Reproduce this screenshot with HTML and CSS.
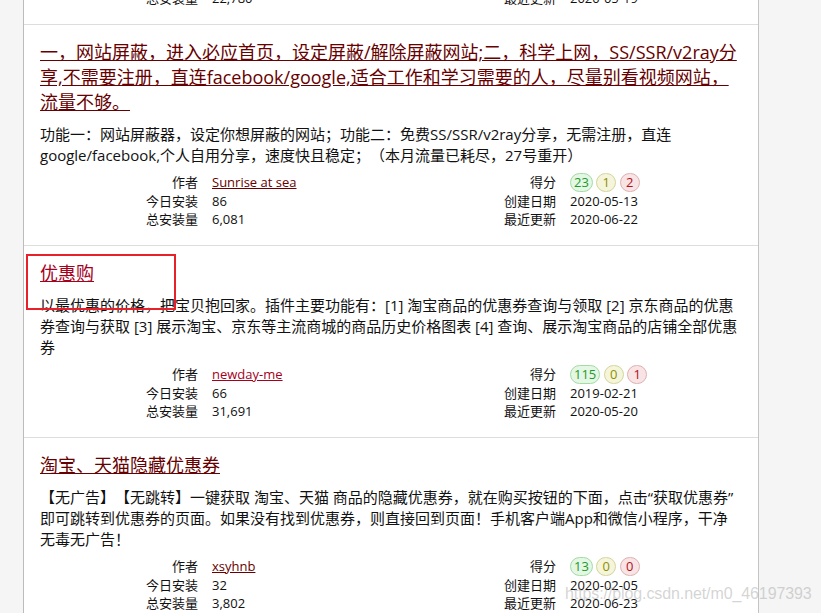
FILE: index.html
```html
<!DOCTYPE html>
<html lang="zh-CN">
<head>
  <meta charset="UTF-8" />
  <meta name="viewport" content="width=device-width, initial-scale=1.0"/>
  <title>Greasy Fork 脚本列表</title>
  <link rel="stylesheet" href="styles.css">
</head>
<body>
  <div class="script-list">
    <!-- tail of the item above, scrolled mostly out of view -->
    <div class="script-item script-tail">
      <dl class="script-stats">
        <dt>总安装量</dt><dd>22,780</dd>
        <dt>最近更新</dt><dd>2020-05-19</dd>
      </dl>
    </div>

    <div class="script-item">
      <h2 class="script-title"><a href="#">一，网站屏蔽，进入必应首页，设定屏蔽/解除屏蔽网站;二，科学上网，SS/SSR/v2ray分享,不需要注册，直连facebook/google,适合工作和学习需要的人，尽量别看视频网站，流量不够。</a></h2>
      <p class="script-desc">功能一：网站屏蔽器，设定你想屏蔽的网站；功能二：免费SS/SSR/v2ray分享，无需注册，直连google/facebook,个人自用分享，速度快且稳定；（本月流量已耗尽，27号重开）</p>
      <dl class="script-stats">
        <dt>作者</dt><dd><a href="#">Sunrise at sea</a></dd>
        <dt>得分</dt><dd><span class="score good">23</span> <span class="score ok">1</span> <span class="score bad">2</span></dd>
        <dt>今日安装</dt><dd>86</dd>
        <dt>创建日期</dt><dd>2020-05-13</dd>
        <dt>总安装量</dt><dd>6,081</dd>
        <dt>最近更新</dt><dd>2020-06-22</dd>
      </dl>
    </div>

    <div class="script-item">
      <div class="mark-box"></div>
      <h2 class="script-title"><a href="#" class="visited">优惠购</a></h2>
      <p class="script-desc">以最优惠的价格，把宝贝抱回家。插件主要功能有：[1] 淘宝商品的优惠券查询与领取 [2] 京东商品的优惠券查询与获取 [3] 展示淘宝、京东等主流商城的商品历史价格图表 [4] 查询、展示淘宝商品的店铺全部优惠券</p>
      <dl class="script-stats">
        <dt>作者</dt><dd><a href="#" class="visited">newday-me</a></dd>
        <dt>得分</dt><dd><span class="score good">115</span> <span class="score ok">0</span> <span class="score bad">1</span></dd>
        <dt>今日安装</dt><dd>66</dd>
        <dt>创建日期</dt><dd>2019-02-21</dd>
        <dt>总安装量</dt><dd>31,691</dd>
        <dt>最近更新</dt><dd>2020-05-20</dd>
      </dl>
    </div>

    <div class="script-item">
      <h2 class="script-title"><a href="#">淘宝、天猫隐藏优惠券</a></h2>
      <p class="script-desc">【无广告】【无跳转】一键获取 淘宝、天猫 商品的隐藏优惠券，就在购买按钮的下面，点击“获取优惠券”即可跳转到优惠券的页面。如果没有找到优惠券，则直接回到页面！手机客户端App和微信小程序，干净无毒无广告！</p>
      <dl class="script-stats">
        <dt>作者</dt><dd><a href="#">xsyhnb</a></dd>
        <dt>得分</dt><dd><span class="score good">13</span> <span class="score ok">0</span> <span class="score bad">0</span></dd>
        <dt>今日安装</dt><dd>32</dd>
        <dt>创建日期</dt><dd>2020-02-05</dd>
        <dt>总安装量</dt><dd>3,802</dd>
        <dt>最近更新</dt><dd>2020-06-23</dd>
      </dl>
    </div>
  </div>

  <div class="watermark">https://blog.csdn.net/m0_46197393</div>
</body>
</html>
```

FILE: styles.css
```css
html {
  overflow: hidden;
}
body {
  font-family: "Open Sans", "Noto Sans CJK SC", sans-serif;
  margin: 0;
  padding: 0;
  background-color: #f5f5f5;
  color: #111;
  text-spacing-trim: space-all;
}
.script-list {
  margin-left: 23px;
  width: 734px;
  background: #fff;
  border-left: 1px solid #bcbcbc;
  border-right: 1px solid #c4c4c4;
}
.script-item {
  position: relative;
  border-top: 1px solid #ddd;
  padding: 15px 16px 17px;
}
.script-tail {
  border-top: none;
  padding-top: 0;
  margin-top: -11px;
}
.script-title {
  font-size: 18px;
  font-weight: normal;
  line-height: 25px;
  margin: 0 0 9px;
}
.script-title a {
  color: #670000;
}
.script-title a.visited,
.script-stats a.visited {
  color: #a5001c;
}
.script-desc {
  font-size: 15px;
  line-height: 21px;
  margin: 0 0 7px;
}
.script-stats {
  display: grid;
  grid-template-columns: 172px 186px 172px auto;
  font-size: 13px;
  line-height: 18px;
  margin: 0;
}
.script-stats dt {
  text-align: right;
  padding-right: 14px;
}
.script-stats dd {
  margin: 0;
}
.script-stats a {
  color: #670000;
}
.score {
  display: inline-block;
  box-sizing: border-box;
  min-width: 20px;
  height: 19px;
  padding: 0 3px;
  border: 1px solid;
  border-radius: 10px;
  line-height: 17px;
  text-align: center;
  vertical-align: middle;
  margin-top: -2px;
}
.score.good {
  color: #1f9a2c;
  background: #e4f6e4;
  border-color: #a3dca3;
}
.score.ok {
  color: #8e8e00;
  background: #f5f5db;
  border-color: #d4d49c;
}
.score.bad {
  color: #b2101c;
  background: #f8e4e4;
  border-color: #e0b0b0;
}
.mark-box {
  position: absolute;
  left: 2px;
  top: 8px;
  width: 146px;
  height: 52px;
  border: 2px solid #e8202a;
}
.watermark {
  position: absolute;
  left: 565px;
  top: 585px;
  font-family: "Liberation Sans", sans-serif;
  font-size: 16px;
  letter-spacing: -0.1px;
  color: rgba(170, 170, 170, 0.5);
  white-space: nowrap;
}
```
